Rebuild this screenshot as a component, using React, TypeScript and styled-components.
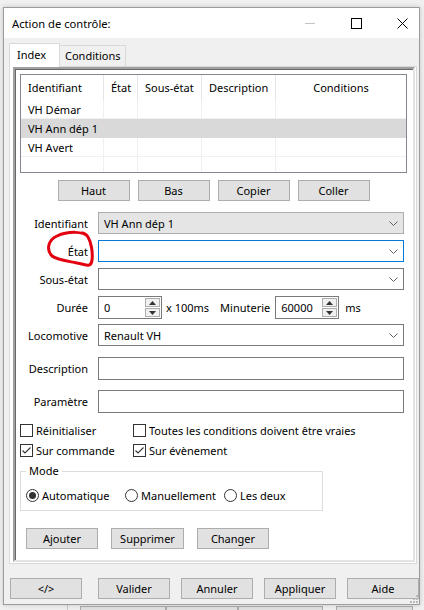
import React from 'react';
import styled, { createGlobalStyle } from 'styled-components';

const GlobalStyle = createGlobalStyle`
  html, body {
    margin: 0;
    padding: 0;
  }
  body {
    background: #f0f0f0;
    font-family: "Noto Sans", "Open Sans", sans-serif;
    font-size: 11px;
    color: #000;
  }
  * {
    box-sizing: border-box;
  }
`;

const Desktop = styled.div`
  width: 424px;
  height: 610px;
  overflow: hidden;
  background: #f0f0f0;
  display: flex;
  flex-direction: column;
`;

const Window = styled.div`
  position: relative;
  margin: 7px 0 0 3px;
  width: 417px;
  height: 598px;
  flex-shrink: 0;
  border: 1px solid #9b9b9b;
  background: #f0f0f0;
  display: flex;
  flex-direction: column;
  overflow: hidden;
  box-shadow: 0 0 5px rgba(0, 0, 0, 0.18);
`;

const TitleBar = styled.div`
  height: 30px;
  flex-shrink: 0;
  background: #fff;
  display: flex;
  align-items: center;
  padding-left: 8px;
  font-size: 11.2px;
`;

const Controls = styled.div`
  margin-left: auto;
  margin-right: -6px;
  display: flex;
  height: 100%;
`;

const ControlButton = styled.div`
  width: 46px;
  height: 100%;
  display: flex;
  align-items: center;
  justify-content: center;
`;

const Body = styled.div`
  flex: 1;
  display: flex;
  flex-direction: column;
  padding: 5px 0 0 5px;
`;

const TabStrip = styled.div`
  display: flex;
  align-items: flex-end;
  height: 23px;
  position: relative;
  z-index: 1;
`;

const Tab = styled.div<{ $active?: boolean }>`
  height: ${(p) => (p.$active ? '24px' : '21px')};
  width: ${(p) => (p.$active ? '51px' : '66px')};
  margin-bottom: ${(p) => (p.$active ? '-1px' : '0')};
  background: ${(p) => (p.$active ? '#fff' : '#f0f0f0')};
  border: 1px solid #d9d9d9;
  border-bottom: none;
  border-left: ${(p) => (p.$active ? '1px solid #d9d9d9' : 'none')};
  padding-left: ${(p) => (p.$active ? '7px' : '5px')};
  line-height: ${(p) => (p.$active ? '22px' : '20px')};
`;

const Panel = styled.div`
  width: 408px;
  height: 498px;
  border: 1px solid #d9d9d9;
  background: #fff;
  display: flex;
  padding: 0 1px 1px 3px;
`;

const Frame = styled.div`
  flex: 1;
  display: flex;
  flex-direction: column;
  border-top: 2px solid #a0a0a0;
  border-left: 2px solid #a0a0a0;
  border-right: 2px solid #e3e3e3;
  border-bottom: 2px solid #e3e3e3;
  box-shadow: inset 1px 1px 0 #696969;
  padding: 5px 6px 0 5px;
`;

const ListView = styled.div`
  height: 99px;
  border: 1px solid #828790;
  display: flex;
  flex-direction: column;
`;

const columns = '83px 34px 64px 74px 1fr';

const HeaderRow = styled.div`
  display: grid;
  grid-template-columns: ${columns};
  height: 25px;
`;

const HeaderCell = styled.div<{ $center?: boolean }>`
  display: flex;
  align-items: center;
  justify-content: ${(p) => (p.$center ? 'center' : 'flex-start')};
  padding-left: ${(p) => (p.$center ? '0' : '7px')};
  border-right: 1px solid #e5e5e5;
  &:last-child {
    border-right: none;
  }
`;

const Cell = styled.div`
  display: flex;
  align-items: center;
  padding-left: 7px;
  border-right: 1px solid #f0f0f0;
  white-space: nowrap;
  &:last-child {
    border-right: none;
  }
`;

const DataRow = styled.div<{ $selected?: boolean }>`
  display: grid;
  grid-template-columns: ${columns};
  height: 19px;
  background: ${(p) => (p.$selected ? '#d9d9d9' : 'transparent')};
  border-bottom: 1px solid ${(p) => (p.$selected ? '#d9d9d9' : '#f0f0f0')};
  ${Cell} {
    border-right-color: ${(p) => (p.$selected ? '#d9d9d9' : '#f0f0f0')};
  }
`;

const EmptyRow = styled.div`
  flex: 1;
  display: grid;
  grid-template-columns: ${columns};
`;

const ButtonRow = styled.div<{ $mt: number; $pl?: number; $gap: number; $center?: boolean }>`
  display: flex;
  justify-content: ${(p) => (p.$center ? 'center' : 'flex-start')};
  gap: ${(p) => p.$gap}px;
  margin-top: ${(p) => p.$mt}px;
  padding-left: ${(p) => p.$pl ?? 0}px;
`;

const Button = styled.button<{ $w?: number; $ml?: number }>`
  width: ${(p) => p.$w ?? 72}px;
  height: 21px;
  margin-left: ${(p) => p.$ml ?? 0}px;
  flex-shrink: 0;
  padding: 0;
  background: #e1e1e1;
  border: 1px solid #adadad;
  font-family: inherit;
  font-size: 11px;
  color: #000;
`;

const FormRow = styled.div<{ $mt: number }>`
  position: relative;
  display: flex;
  align-items: center;
  margin-top: ${(p) => p.$mt}px;
`;

const Label = styled.div`
  width: 68px;
  margin-right: 10px;
  text-align: right;
  white-space: nowrap;
`;

const Combo = styled.div<{ $gray?: boolean; $focused?: boolean }>`
  width: 306px;
  height: 22px;
  display: flex;
  align-items: center;
  padding: 0 5px 0 5px;
  background: ${(p) => (p.$gray ? '#e5e5e5' : '#fff')};
  border: 1px solid ${(p) => (p.$focused ? '#0078d7' : p.$gray ? '#adadad' : '#7a7a7a')};
`;

const ComboText = styled.span`
  flex: 1;
`;

const TextBox = styled.div`
  width: 306px;
  height: 23px;
  background: #fff;
  border: 1px solid #7a7a7a;
`;

const SpinBox = styled.div`
  width: 64px;
  height: 23px;
  display: flex;
  background: #fff;
  border: 1px solid #7a7a7a;
`;

const SpinValue = styled.div`
  flex: 1;
  display: flex;
  align-items: center;
  padding-left: 5px;
`;

const SpinButtons = styled.div`
  width: 16px;
  display: flex;
  flex-direction: column;
  padding: 1px 1px 1px 0;
  gap: 1px;
`;

const SpinButton = styled.div`
  flex: 1;
  display: flex;
  align-items: center;
  justify-content: center;
  background: #f0f0f0;
  border: 1px solid #adadad;
`;

const InlineText = styled.span<{ $ml: number }>`
  margin-left: ${(p) => p.$ml}px;
  white-space: nowrap;
`;

const SpinWrap = styled.div<{ $ml: number }>`
  margin-left: ${(p) => p.$ml}px;
`;

const CheckGrid = styled.div`
  display: grid;
  grid-template-columns: 113px auto;
  grid-auto-rows: 20px;
  margin-top: 7px;
`;

const CheckItem = styled.label`
  display: flex;
  align-items: center;
  gap: 3px;
  white-space: nowrap;
`;

const CheckBox = styled.span`
  width: 13px;
  height: 13px;
  border: 1px solid #333;
  background: #fff;
  display: flex;
  align-items: center;
  justify-content: center;
`;

const GroupBox = styled.fieldset`
  width: 303px;
  margin: 3px 0 0 0;
  padding: 0 5px 5px 5px;
  border: 1px solid #dcdcdc;
  min-width: 0;
`;

const Legend = styled.legend`
  padding: 0 3px;
  line-height: 16px;
`;

const RadioRow = styled.div`
  display: flex;
  height: 20px;
  margin-top: 6px;
`;

const RadioItem = styled.label<{ $w?: number }>`
  display: flex;
  align-items: center;
  gap: 3px;
  width: ${(p) => (p.$w ? `${p.$w}px` : 'auto')};
  white-space: nowrap;
`;

const RadioCircle = styled.span<{ $checked?: boolean }>`
  width: 13px;
  height: 13px;
  border-radius: 50%;
  border: 1px solid #333;
  background: #fff;
  display: flex;
  align-items: center;
  justify-content: center;
  &::after {
    content: '';
    width: 7px;
    height: 7px;
    border-radius: 50%;
    background: ${(p) => (p.$checked ? '#333' : 'transparent')};
  }
`;

const Marker = styled.svg`
  position: absolute;
  left: 24px;
  top: -12px;
  pointer-events: none;
`;

const Grip = styled.svg`
  position: absolute;
  right: 1px;
  bottom: 1px;
`;

const BgStrip = styled.div`
  height: 6px;
  display: flex;
  overflow: hidden;
  border-left: 1px solid #c8c8c8;
  margin-left: 67px;
`;

const BgButton = styled.div<{ $w: number; $ml: number }>`
  width: ${(p) => p.$w}px;
  margin-left: ${(p) => p.$ml}px;
  height: 22px;
  margin-top: 1px;
  background: #e1e1e1;
  border: 1px solid #adadad;
`;

const Chevron = () => (
  <svg width="9" height="5" viewBox="0 0 9 5">
    <polyline points="0.5,0.5 4.5,4.5 8.5,0.5" fill="none" stroke="#606060" strokeWidth="1" />
  </svg>
);

const Check = () => (
  <svg width="11" height="11" viewBox="0 0 11 11">
    <polyline points="1.5,5.5 4,8 9.5,2.5" fill="none" stroke="#333" strokeWidth="1.1" />
  </svg>
);

const Spinner = ({ value }: { value: string }) => (
  <SpinBox>
    <SpinValue>{value}</SpinValue>
    <SpinButtons>
      <SpinButton>
        <svg width="7" height="4" viewBox="0 0 7 4">
          <polygon points="0,4 3.5,0 7,4" fill="#333" />
        </svg>
      </SpinButton>
      <SpinButton>
        <svg width="7" height="4" viewBox="0 0 7 4">
          <polygon points="0,0 3.5,4 7,0" fill="#333" />
        </svg>
      </SpinButton>
    </SpinButtons>
  </SpinBox>
);

const rows = [
  { id: 'VH Démar', selected: false },
  { id: 'VH Ann dép 1', selected: true },
  { id: 'VH Avert', selected: false },
];

const App = () => {
  return (
    <Desktop>
      <GlobalStyle />
      <Window>
        <TitleBar>
          <span>Action de contrôle:</span>
          <Controls>
            <ControlButton>
              <svg width="10" height="10" viewBox="0 0 10 10">
                <line x1="0" y1="5.5" x2="10" y2="5.5" stroke="#c4c4c4" strokeWidth="1" />
              </svg>
            </ControlButton>
            <ControlButton>
              <svg width="11" height="11" viewBox="0 0 11 11">
                <rect x="0.5" y="0.5" width="10" height="10" fill="none" stroke="#000" strokeWidth="1" />
              </svg>
            </ControlButton>
            <ControlButton>
              <svg width="11" height="11" viewBox="0 0 11 11">
                <line x1="0.5" y1="0.5" x2="10.5" y2="10.5" stroke="#000" strokeWidth="1" />
                <line x1="10.5" y1="0.5" x2="0.5" y2="10.5" stroke="#000" strokeWidth="1" />
              </svg>
            </ControlButton>
          </Controls>
        </TitleBar>

        <Body>
          <TabStrip>
            <Tab $active>Index</Tab>
            <Tab>Conditions</Tab>
          </TabStrip>

          <Panel>
            <Frame>
              <ListView>
                <HeaderRow>
                  <HeaderCell>Identifiant</HeaderCell>
                  <HeaderCell>État</HeaderCell>
                  <HeaderCell>Sous-état</HeaderCell>
                  <HeaderCell>Description</HeaderCell>
                  <HeaderCell $center>Conditions</HeaderCell>
                </HeaderRow>
                {rows.map((r) => (
                  <DataRow key={r.id} $selected={r.selected}>
                    <Cell>{r.id}</Cell>
                    <Cell />
                    <Cell />
                    <Cell />
                    <Cell />
                  </DataRow>
                ))}
                <EmptyRow>
                  <Cell />
                  <Cell />
                  <Cell />
                  <Cell />
                  <Cell />
                </EmptyRow>
              </ListView>

              <ButtonRow $mt={7} $gap={8} $center>
                <Button>Haut</Button>
                <Button>Bas</Button>
                <Button>Copier</Button>
                <Button>Coller</Button>
              </ButtonRow>

              <FormRow $mt={11}>
                <Label>Identifiant</Label>
                <Combo $gray>
                  <ComboText>VH Ann dép 1</ComboText>
                  <Chevron />
                </Combo>
              </FormRow>

              <FormRow $mt={6}>
                <Label>État</Label>
                <Combo $focused>
                  <ComboText />
                  <Chevron />
                </Combo>
                <Marker width="52" height="46" viewBox="0 0 52 46">
                  <path
                    d="M44 9 C40 3, 24 3, 13 8 C4 12, 2 22, 8 28 C13 32, 24 33, 33 35 C41 36, 47 41, 48 32 C49 24, 47 14, 44 9 C42 6, 40 5, 38 5"
                    fill="none"
                    stroke="#e3000f"
                    strokeWidth="3"
                    strokeLinecap="round"
                  />
                </Marker>
              </FormRow>

              <FormRow $mt={6}>
                <Label>Sous-état</Label>
                <Combo>
                  <ComboText />
                  <Chevron />
                </Combo>
              </FormRow>

              <FormRow $mt={6}>
                <Label>Durée</Label>
                <Spinner value="0" />
                <InlineText $ml={4}>x 100ms</InlineText>
                <InlineText $ml={11}>Minuterie</InlineText>
                <SpinWrap $ml={5}>
                  <Spinner value="60000" />
                </SpinWrap>
                <InlineText $ml={6}>ms</InlineText>
              </FormRow>

              <FormRow $mt={5}>
                <Label>Locomotive</Label>
                <Combo>
                  <ComboText>Renault VH</ComboText>
                  <Chevron />
                </Combo>
              </FormRow>

              <FormRow $mt={11}>
                <Label>Description</Label>
                <TextBox />
              </FormRow>

              <FormRow $mt={10}>
                <Label>Paramètre</Label>
                <TextBox />
              </FormRow>

              <CheckGrid>
                <CheckItem>
                  <CheckBox />
                  Réinitialiser
                </CheckItem>
                <CheckItem>
                  <CheckBox />
                  Toutes les conditions doivent être vraies
                </CheckItem>
                <CheckItem>
                  <CheckBox>
                    <Check />
                  </CheckBox>
                  Sur commande
                </CheckItem>
                <CheckItem>
                  <CheckBox>
                    <Check />
                  </CheckBox>
                  Sur évènement
                </CheckItem>
              </CheckGrid>

              <GroupBox>
                <Legend>Mode</Legend>
                <RadioRow>
                  <RadioItem $w={99}>
                    <RadioCircle $checked />
                    Automatique
                  </RadioItem>
                  <RadioItem $w={99}>
                    <RadioCircle />
                    Manuellement
                  </RadioItem>
                  <RadioItem>
                    <RadioCircle />
                    Les deux
                  </RadioItem>
                </RadioRow>
              </GroupBox>

              <ButtonRow $mt={17} $pl={6} $gap={13}>
                <Button>Ajouter</Button>
                <Button $w={73}>Supprimer</Button>
                <Button>Changer</Button>
              </ButtonRow>
            </Frame>
          </Panel>

          <ButtonRow $mt={14} $gap={0}>
            <Button $ml={1}>&lt;/&gt;</Button>
            <Button $ml={16}>Valider</Button>
            <Button $ml={11}>Annuler</Button>
            <Button $ml={11}>Appliquer</Button>
            <Button $ml={11}>Aide</Button>
          </ButtonRow>
        </Body>

        <Grip width="8" height="8" viewBox="0 0 8 8">
          <rect x="6" y="0" width="2" height="2" fill="#b8b8b8" />
          <rect x="3" y="3" width="2" height="2" fill="#b8b8b8" />
          <rect x="6" y="3" width="2" height="2" fill="#b8b8b8" />
          <rect x="0" y="6" width="2" height="2" fill="#b8b8b8" />
          <rect x="3" y="6" width="2" height="2" fill="#b8b8b8" />
          <rect x="6" y="6" width="2" height="2" fill="#b8b8b8" />
        </Grip>
      </Window>

      <BgStrip>
        <BgButton $w={86} $ml={12} />
        <BgButton $w={72} $ml={0} />
        <BgButton $w={85} $ml={0} />
        <BgButton $w={77} $ml={13} />
      </BgStrip>
    </Desktop>
  );
};

export default App;
